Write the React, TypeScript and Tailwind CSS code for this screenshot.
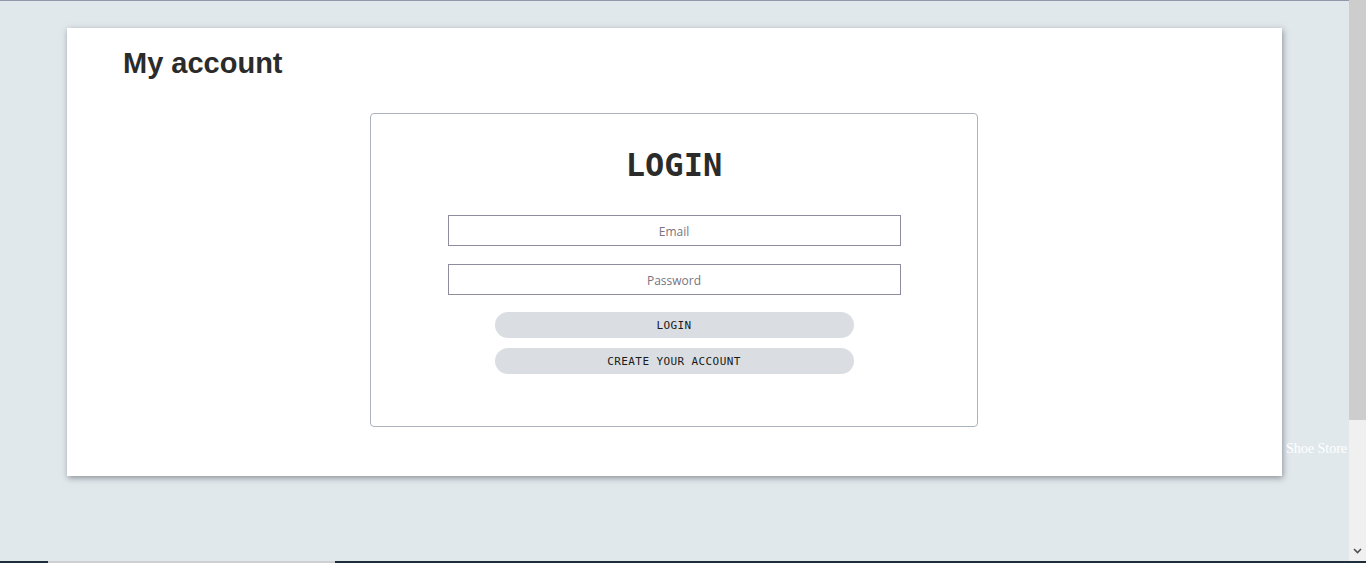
export default function App() {
  return (
    <div className="flex flex-col w-[1366px] h-[563px] overflow-hidden bg-[#e1e8ec]">
      <div className="flex h-[561px]">
        <div className="flex-1 overflow-hidden border-t border-[#9098a9] bg-[#e1e8ec]">
          <div className="flex items-start pt-[27px] pl-[67px]">
            <div className="w-[1215px] h-[448px] shrink-0 bg-white shadow-[1px_2px_6px_rgba(50,60,70,0.5)] px-[56px] pt-[18px]">
              <h2 className="text-[29px] leading-[35px] font-bold text-[#2b2b2b] font-['Liberation_Sans',Arial,sans-serif]">
                My account
              </h2>
              <div className="flex justify-center mt-[32px] pr-[1px]">
                <div className="w-[608px] h-[314px] border border-[#aab3be] rounded-[4px] flex flex-col items-center pt-[32px]">
                  <h1 className="text-[32px] leading-[38px] font-bold text-[#2b2b2b] font-['DejaVu_Sans_Mono',monospace]">
                    LOGIN
                  </h1>
                  <input
                    type="email"
                    placeholder="Email"
                    className="mt-[31px] w-[453px] h-[31px] pt-[2px] border border-[#8f8c9d] text-center text-[12px] font-['Open_Sans',sans-serif] placeholder:text-[#777380] outline-none"
                  />
                  <input
                    type="password"
                    placeholder="Password"
                    className="mt-[18px] w-[453px] h-[31px] pt-[1px] border border-[#8f8c9d] text-center text-[12px] font-['Open_Sans',sans-serif] placeholder:text-[#777380] outline-none"
                  />
                  <button className="mt-[17px] w-[359px] h-[26px] pt-[3px] rounded-full bg-[#dadee2] text-[11px] tracking-[0.4px] text-[#1a1a1a] font-['DejaVu_Sans_Mono',monospace]">
                    LOGIN
                  </button>
                  <button className="mt-[10px] w-[359px] h-[26px] pt-[3px] rounded-full bg-[#dadee2] text-[11px] tracking-[0.4px] text-[#1a1a1a] font-['DejaVu_Sans_Mono',monospace]">
                    CREATE YOUR ACCOUNT
                  </button>
                </div>
              </div>
            </div>
            <span className="ml-[4px] mt-[412px] whitespace-nowrap text-[14px] leading-[18px] text-white font-['Liberation_Serif',serif]">
              Shoe Store
            </span>
          </div>
        </div>
        <div className="w-[17px] bg-[#f0f0f0] flex flex-col">
          <div className="h-[420px] bg-[#cdcdcd]" />
          <div className="flex-1" />
          <div className="h-[20px] flex items-center justify-center">
            <svg width="9" height="6" viewBox="0 0 9 6">
              <path d="M1 1 L4.5 4.5 L8 1" stroke="#505050" strokeWidth="1.6" fill="none" />
            </svg>
          </div>
        </div>
      </div>
      <div className="h-[2px] flex bg-[#1d2d3a]">
        <div className="ml-[48px] w-[287px] bg-[#d0d0d0]" />
      </div>
    </div>
  );
}
